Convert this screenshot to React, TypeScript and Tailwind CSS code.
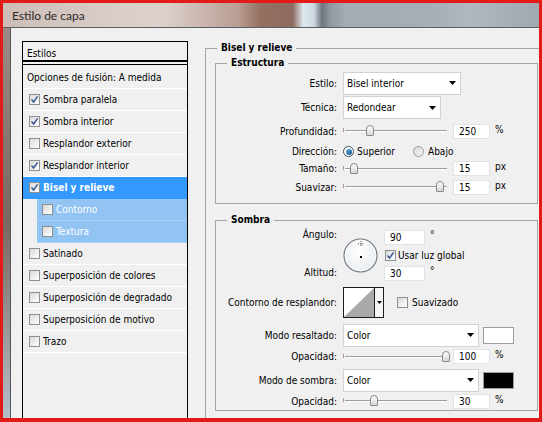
import React from 'react';

const listRows = [
  { label: 'Sombra paralela', on: true },
  { label: 'Sombra interior', on: true },
  { label: 'Resplandor exterior', on: false },
  { label: 'Resplandor interior', on: true },
];

const lowerRows = [
  'Satinado',
  'Superposición de colores',
  'Superposición de degradado',
  'Superposición de motivo',
  'Trazo',
];

function CheckBox({ on }: { on?: boolean }) {
  return (
    <span className="flex h-[11px] w-[11px] shrink-0 items-center justify-center border border-[#8e8f8f] bg-gradient-to-br from-[#d9d9d9] to-white">
      {on && (
        <svg width="9" height="9" viewBox="0 0 9 9">
          <path d="M1.5 4.6 L3.6 7 L7.6 1.4" stroke="#3b5693" strokeWidth="1.5" fill="none" />
        </svg>
      )}
    </span>
  );
}

function Radio({ on }: { on?: boolean }) {
  return (
    <span
      className={`flex h-[11px] w-[11px] shrink-0 items-center justify-center rounded-full border ${
        on ? 'border-[#3c4a57] bg-white' : 'border-[#9a9a9a] bg-gradient-to-br from-[#d8d8d8] to-[#f8f8f8]'
      }`}
    >
      {on && <span className="h-[6px] w-[6px] rounded-full bg-gradient-to-br from-[#5ab4e8] to-[#0f4f86]" />}
    </span>
  );
}

function Select({ value, className }: { value: string; className: string }) {
  return (
    <div className={`flex h-[23px] items-center justify-between border border-[#d2d2d2] bg-white pl-[3px] pr-[4px] ${className}`}>
      <span>{value}</span>
      <svg width="7" height="4" viewBox="0 0 7 4">
        <path d="M0 0h7L3.5 4z" fill="#000" />
      </svg>
    </div>
  );
}

function NumBox({ value, className = 'w-[37px]' }: { value: string; className?: string }) {
  return (
    <div className={`flex h-[15px] items-center border border-[#e3e3e3] bg-white pl-[5px] ${className}`}>{value}</div>
  );
}

function Slider({ pos }: { pos: number }) {
  return (
    <div className="relative h-[12px] w-[104px]">
      <div className="absolute left-[2px] right-0 top-[5px] h-[2px] border-t border-b border-t-[#9c9c9c] border-b-white" />
      <div className="absolute left-0 top-[3px] h-[4px] w-[1px] bg-[#9c9c9c]" />
      <div
        className="absolute top-0 h-[11px] w-[8px] rounded-t-[4px] rounded-b-[1px] border border-[#8a8a8a] bg-gradient-to-b from-white to-[#d6d6d6]"
        style={{ left: pos }}
      />
    </div>
  );
}

function Row({ label, className, children }: { label: string; className: string; children: React.ReactNode }) {
  return (
    <div className={`flex items-center ${className}`}>
      <span className="w-[122px] shrink-0 pr-[1px] text-right">{label}</span>
      <div className="ml-[5px] flex items-center">{children}</div>
    </div>
  );
}

function SliderRow({ label, className, pos, value, unit }: { label: string; className: string; pos: number; value: string; unit: string }) {
  return (
    <Row label={label} className={className}>
      <Slider pos={pos} />
      <NumBox value={value} className="ml-[6px] w-[37px]" />
      <span className="ml-[5px] -mt-[4px]">{unit}</span>
    </Row>
  );
}

function Legend({ text }: { text: string }) {
  return <div className="-mt-[8px] ml-[11px] h-[14px] w-fit bg-[#f0f0f0] px-[4px] font-bold leading-[14px]">{text}</div>;
}

function Dial() {
  return (
    <svg width="35" height="35" viewBox="0 0 35 35">
      <defs>
        <radialGradient id="dialfill" cx="0.45" cy="0.4" r="0.6">
          <stop offset="0" stopColor="#ffffff" />
          <stop offset="1" stopColor="#e9ecef" />
        </radialGradient>
      </defs>
      <circle cx="17.5" cy="17.5" r="16.5" fill="url(#dialfill)" stroke="#6d7781" strokeWidth="1.2" />
      <circle cx="17.5" cy="17.5" r="15.3" fill="none" stroke="#ffffff" strokeWidth="0.8" />
      <path d="M18 3v6M15 6h6" stroke="#555" strokeWidth="1" strokeDasharray="1 1" />
      <rect x="17" y="18" width="2" height="2" fill="#000" />
    </svg>
  );
}

function ContourBox() {
  return (
    <div className="flex h-[31px] w-[41px] border border-[#1c1c1c] bg-white">
      <svg width="30" height="29" viewBox="0 0 30 29" className="shrink-0">
        <path d="M0 29 L30 0 L30 29 Z" fill="#a9a9a9" />
      </svg>
      <div className="flex flex-1 items-center justify-center border-l border-[#1c1c1c] bg-[#f4f4f4]">
        <svg width="5" height="3" viewBox="0 0 5 3">
          <path d="M0 0h5L2.5 3z" fill="#000" />
        </svg>
      </div>
    </div>
  );
}

export default function App() {
  return (
    <div className="h-[422px] w-[542px] overflow-hidden bg-[#e21b18] pb-[4px] pl-[3px] pr-[3px] pt-[3px] font-['DejaVu_Sans_Condensed','Liberation_Sans',sans-serif] text-[10px] leading-[13px] text-black">
      <div className="flex h-full flex-col overflow-hidden">
        {/* title bar */}
        <div className="flex h-[25px] shrink-0 items-center border-b border-[#5b5e62] bg-[linear-gradient(90deg,#cdbdb6_0%,#d9cdc8_20%,#dcd1cc_30%,#b99d93_44%,#93705f_48%,#8d6b5f_54%,#dde7ee_56%,#cfdae3_58%,#6e757d_59.5%,#8f979f_61%,#a3abb3_64%,#a6aeb6_80%,#b0b7be_87%,#a0a8b0_100%)] pl-[9px]">
          <span className="font-['Lato','Noto_Sans',sans-serif] text-[12px] text-[#2b2b2b]">Estilo de capa</span>
        </div>

        <div className="flex min-h-0 flex-1">
          {/* window frame edge */}
          <div className="w-[7px] shrink-0 bg-gradient-to-b from-[#9c8a84] via-[#7a675f] to-[#b4c0c8]" />

          <div className="flex min-w-0 flex-1 items-start overflow-hidden border-l border-[#55585c] bg-[#f0f0f0] pl-[11px] pt-[13px]">
            {/* styles list */}
            <div className="h-[390px] w-[166px] shrink-0 border border-black">
              <div className="h-[20px] border-b-2 border-black pl-[4px] pt-[5px]">Estilos</div>
              <div className="mt-[2px] border-t border-black" />
              <div className="flex h-[24px] items-center border-b border-white pl-[4px] pt-[1px]">Opciones de fusión: A medida</div>
              {listRows.map((r) => (
                <div key={r.label} className="flex h-[22px] items-center gap-[3px] border-b border-white pl-[6px]">
                  <CheckBox on={r.on} />
                  <span>{r.label}</span>
                </div>
              ))}
              <div className="flex h-[22px] items-center gap-[3px] border-b border-[#3399fe] bg-[#3399fe] pl-[6px] font-bold text-white">
                <CheckBox on />
                <span>Bisel y relieve</span>
              </div>
              {['Contorno', 'Textura'].map((t) => (
                <div key={t} className="ml-[14px] flex h-[22px] items-center gap-[3px] border-b border-[#a9d0f7] bg-[#91c3f3] pl-[5px] text-white">
                  <CheckBox />
                  <span>{t}</span>
                </div>
              ))}
              {lowerRows.map((t) => (
                <div key={t} className="flex h-[22px] items-center gap-[3px] border-b border-white pl-[6px]">
                  <CheckBox />
                  <span>{t}</span>
                </div>
              ))}
            </div>

            {/* Bisel y relieve group */}
            <div className="ml-[17px] mt-[7px] h-[390px] w-[343px] shrink-0 border border-[#a5a5a5] pl-[9px]">
              <div className="-ml-[9px]">
                <Legend text="Bisel y relieve" />
              </div>

              <div className="mt-[8px] w-[323px] border border-[#a5a5a5] pb-[5px]">
                <Legend text="Estructura" />
                <div className="pt-[1px]">
                  <Row label="Estilo:" className="h-[24px]">
                    <Select value="Bisel interior" className="w-[118px]" />
                  </Row>
                  <Row label="Técnica:" className="h-[25px]">
                    <Select value="Redondear" className="w-[98px]" />
                  </Row>
                  <SliderRow label="Profundidad:" className="h-[22px]" pos={23} value="250" unit="%" />
                  <Row label="Dirección:" className="h-[19px]">
                    <div className="flex w-[70px] items-center gap-[3px]">
                      <Radio on />
                      <span>Superior</span>
                    </div>
                    <div className="flex items-center gap-[4px]">
                      <Radio />
                      <span>Abajo</span>
                    </div>
                  </Row>
                  <SliderRow label="Tamaño:" className="h-[15px]" pos={7} value="15" unit="px" />
                  <SliderRow label="Suavizar:" className="h-[22px]" pos={93} value="15" unit="px" />
                </div>
              </div>

              <div className="mt-[16px] w-[323px] border border-[#a5a5a5]">
                <Legend text="Sombra" />
                <div className="flex pt-[1px]">
                  <div className="flex h-[52px] w-[122px] shrink-0 flex-col justify-between pr-[1px] text-right leading-[14px]">
                    <span>Ángulo:</span>
                    <span>Altitud:</span>
                  </div>
                  <div className="ml-[5px] mt-[10px]">
                    <Dial />
                  </div>
                  <div className="ml-[6px] flex flex-col gap-[4px] pt-[2px]">
                    <div className="flex items-start">
                      <NumBox value="90" className="w-[41px]" />
                      <span className="ml-[5px] -mt-[2px]">°</span>
                    </div>
                    <div className="flex h-[13px] items-center gap-[2px] pl-[1px]">
                      <CheckBox on />
                      <span>Usar luz global</span>
                    </div>
                    <div className="flex items-start">
                      <NumBox value="30" className="w-[41px]" />
                      <span className="ml-[5px] -mt-[2px]">°</span>
                    </div>
                  </div>
                </div>

                <Row label="Contorno de resplandor:" className="mt-[6px] h-[31px]">
                  <ContourBox />
                  <div className="ml-[13px] flex items-center gap-[4px]">
                    <CheckBox />
                    <span>Suavizado</span>
                  </div>
                </Row>

                <Row label="Modo resaltado:" className="mt-[5px] h-[24px]">
                  <Select value="Color" className="w-[136px]" />
                  <div className="ml-[4px] h-[17px] w-[31px] border border-[#9d9d9d] bg-white" />
                </Row>
                <SliderRow label="Opacidad:" className="h-[19px]" pos={99} value="100" unit="%" />
                <Row label="Modo de sombra:" className="mt-[2px] h-[24px]">
                  <Select value="Color" className="w-[136px]" />
                  <div className="ml-[4px] h-[17px] w-[31px] border border-[#9d9d9d] bg-black" />
                </Row>
                <SliderRow label="Opacidad:" className="h-[18px]" pos={27} value="30" unit="%" />
              </div>
            </div>
          </div>
        </div>
      </div>
    </div>
  );
}
